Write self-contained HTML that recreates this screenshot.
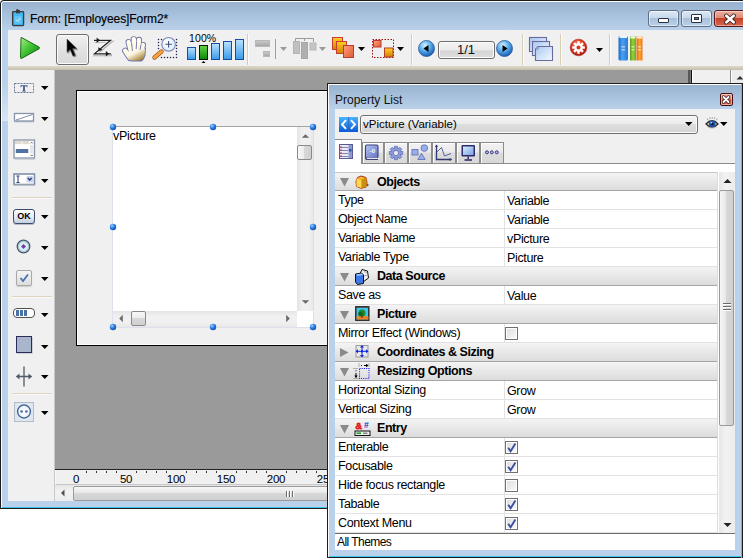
<!DOCTYPE html>
<html><head><meta charset="utf-8">
<style>
*{box-sizing:border-box}
html,body{margin:0;padding:0}
body{width:743px;height:558px;position:relative;overflow:hidden;background:#fff;font-family:"Liberation Sans",sans-serif;font-size:12px;color:#000}
.a{position:absolute}
.t{position:absolute;white-space:nowrap;line-height:14px}
.arr{position:absolute;width:0;height:0;border-left:4px solid transparent;border-right:4px solid transparent;border-top:4px solid #000}
svg{position:absolute;overflow:visible}
</style></head><body>

<div class="a" style="left:0px;top:0px;width:760px;height:509px;background:#1c1c1c;border-top-left-radius:4px"></div>
<div class="a" style="left:1px;top:1px;width:760px;height:507px;background:#fdfdfd;border-top-left-radius:3px"></div>
<div class="a" style="left:2px;top:507px;width:760px;height:1px;background:#3ec3ea"></div>
<div class="a" style="left:2px;top:2px;width:760px;height:505px;background:#b9d1ea;border-top-left-radius:2px"></div>
<div class="a" style="left:2px;top:2px;width:760px;height:28px;background:linear-gradient(#98b2cf,#b9d1ea);border-top-left-radius:2px"></div>
<div class="a" style="left:2px;top:84px;width:6px;height:37px;background:linear-gradient(#b9d1ea,#d6e6f6)"></div>
<div class="t" style="left:30px;top:12px;font-size:12px;letter-spacing:-0.08px;color:#000;-webkit-text-stroke:0.15px #000">Form: [Employees]Form2*</div>
<div class="a" style="left:648px;top:10px;width:31px;height:17px;border:1px solid #5f6f86;border-radius:3px;background:linear-gradient(#dce8f4 0,#c8d9ec 45%,#a9c1dc 50%,#b9d0ea 100%);box-shadow:inset 0 0 0 1px rgba(255,255,255,.55)"></div>
<div class="a" style="left:681px;top:10px;width:31px;height:17px;border:1px solid #5f6f86;border-radius:3px;background:linear-gradient(#dce8f4 0,#c8d9ec 45%,#a9c1dc 50%,#b9d0ea 100%);box-shadow:inset 0 0 0 1px rgba(255,255,255,.55)"></div>
<div class="a" style="left:714px;top:10px;width:50px;height:17px;border:1px solid #5a1a1a;border-radius:3px;background:linear-gradient(#eab0a0 0,#de8c78 45%,#c8402a 50%,#d66a50 100%);box-shadow:inset 0 0 0 1px rgba(255,255,255,.4)"></div>
<div class="a" style="left:658px;top:18px;width:11px;height:5px;background:#fff;border:1px solid #2a3040;border-radius:1px"></div>
<div class="a" style="left:691px;top:14px;width:11px;height:9px;background:#fff;border:1px solid #2a3040;border-radius:1px"></div>
<div class="a" style="left:694px;top:17px;width:5px;height:3px;background:#6a7a90;border:1px solid #2a3040"></div>
<svg style="left:724px;top:14px" width="12" height="10" viewBox="0 0 12 10"><path d="M2.3 1.8L9.7 8.2M9.7 1.8L2.3 8.2" stroke="#3a2020" stroke-width="4.4" stroke-linecap="round"/><path d="M2.3 1.8L9.7 8.2M9.7 1.8L2.3 8.2" stroke="#fff" stroke-width="2.7" stroke-linecap="round"/></svg>
<svg style="left:11px;top:9px" width="15" height="18" viewBox="0 0 15 18"><rect x="1.6" y="2.6" width="11" height="14" rx=".8" fill="#3aaee8" stroke="#3c3c3c" stroke-width="1.3"/><rect x="3" y="4" width="8.2" height="11" fill="#48b8f0"/><rect x="3.5" y="7" width="7.2" height="7.5" fill="#62c4f4"/><path d="M5 1H9V4.3H5Z" fill="#3c3c3c"/><path d="M6.3 0V2" stroke="#3c3c3c" stroke-width="1.6"/><path d="M4.8 10.5L6.6 12.3L9.6 8.8" stroke="#d8f0fc" stroke-width="1" fill="none"/></svg>
<div class="a" style="left:8px;top:30px;width:760px;height:36px;background:#f0f0f0"></div>
<div class="a" style="left:8px;top:66px;width:760px;height:4px;background:linear-gradient(#dcd8c8,#d4d0bf 40%,#c2bea9)"></div>
<svg style="left:19px;top:36px" width="22" height="24" viewBox="0 0 22 24"><defs><linearGradient id="gp" x1="0" y1="0" x2="1" y2="1"><stop offset="0" stop-color="#a8f080"/><stop offset=".5" stop-color="#3cc030"/><stop offset="1" stop-color="#0c7a10"/></linearGradient></defs><path d="M2 2.5Q1.5 1 3 1.8L20 11Q21.2 12 20 12.8L3 22.2Q1.5 23 1.5 21.5Z" fill="url(#gp)" stroke="#1a6a1a" stroke-width="1"/></svg>
<div class="a" style="left:56px;top:34px;width:33px;height:31px;border:1px solid #6e6e6e;border-radius:3px;background:linear-gradient(#f0f0f0,#e2e2e2 50%,#d9d9d9);box-shadow:inset 0 0 0 1px #fafafa"></div>
<svg style="left:64px;top:37px" width="16" height="22" viewBox="0 0 16 22"><path d="M3 2L3 15.5L6.2 12.6L9 19.2L11.3 18.2L8.6 11.8L12.8 11.6Z" fill="#000" stroke="#555" stroke-width=".6" stroke-linejoin="round" filter="drop-shadow(1px 1px 0.6px rgba(0,0,0,.35))"/></svg>
<svg style="left:92px;top:37px" width="22" height="22" viewBox="0 0 22 22"><path d="M2 3.3H18.6L2.4 16.8H19" transform="translate(0.9 1.4)" fill="none" stroke="rgba(0,0,0,.28)" stroke-width="2.2"/><path d="M2 3.3H18.6L2.4 16.8H19" fill="none" stroke="#fff" stroke-width="2.8"/><path d="M2 3.3H18.6L2.4 16.8H19" fill="none" stroke="#1e1e1e" stroke-width="1.25"/><path d="M4.6 0.6L8 3.3L4.6 6Z" fill="#1e1e1e"/><path d="M6.2 10.2L6.6 14.2L10.6 12.8Z" fill="#1e1e1e"/><path d="M13.8 14.1L17.2 16.8L13.8 19.5Z" fill="#1e1e1e"/></svg>
<svg style="left:120px;top:34px" width="30" height="30" viewBox="0 0 30 30"><defs><linearGradient id="gh" gradientUnits="userSpaceOnUse" x1="10" y1="8" x2="20" y2="27"><stop offset="0" stop-color="#ffffee"/><stop offset=".55" stop-color="#fbf6e2"/><stop offset="1" stop-color="#a07a28"/></linearGradient></defs><path d="M8.6 8L11.2 19" stroke="#7476ac" stroke-width="6.1" stroke-linecap="round"/><path d="M13.8 5.3L14.2 17" stroke="#7476ac" stroke-width="6.300000000000001" stroke-linecap="round"/><path d="M19 5.8L18.2 17" stroke="#7476ac" stroke-width="6.199999999999999" stroke-linecap="round"/><path d="M23.2 10.8L21.2 19" stroke="#7476ac" stroke-width="5.699999999999999" stroke-linecap="round"/><path d="M5.2 16.8L10 24" stroke="#7476ac" stroke-width="6.300000000000001" stroke-linecap="round"/><path d="M9 17L25 14.5L24.6 21Q23.5 25 21.5 26.5H11.5Q8.5 24 7 21Z" fill="#7476ac" stroke="#7476ac" stroke-width="1.9" stroke-linejoin="round"/><path d="M8.6 8L11.2 19" stroke="url(#gh)" stroke-width="4.2" stroke-linecap="round"/><path d="M13.8 5.3L14.2 17" stroke="url(#gh)" stroke-width="4.4" stroke-linecap="round"/><path d="M19 5.8L18.2 17" stroke="url(#gh)" stroke-width="4.3" stroke-linecap="round"/><path d="M23.2 10.8L21.2 19" stroke="url(#gh)" stroke-width="3.8" stroke-linecap="round"/><path d="M5.2 16.8L10 24" stroke="url(#gh)" stroke-width="4.4" stroke-linecap="round"/><path d="M9 17L25 14.5L24.6 21Q23.5 25 21.5 26.5H11.5Q8.5 24 7 21Z" fill="url(#gh)" stroke="url(#gh)" stroke-width="0.01" stroke-linejoin="round"/><path d="M11.7 9.5L12.4 17M16.6 8L16.2 15M20.9 11L20 16" stroke="#7476ac" stroke-width=".9"/></svg>
<svg style="left:152px;top:36px" width="28" height="26" viewBox="0 0 28 26"><g fill="#202050"><circle cx="6.5" cy="3.5" r=".75"/><circle cx="9.5" cy="3.5" r=".75"/><circle cx="24.5" cy="3.5" r=".75"/><circle cx="6.5" cy="6.5" r=".75"/><circle cx="24.5" cy="6.5" r=".75"/><circle cx="6.5" cy="9.5" r=".75"/><circle cx="24.5" cy="9.5" r=".75"/><circle cx="6.5" cy="12.5" r=".75"/><circle cx="24.5" cy="12.5" r=".75"/><circle cx="24.5" cy="15.5" r=".75"/><circle cx="24.5" cy="18.5" r=".75"/><circle cx="24.5" cy="21.5" r=".75"/><circle cx="9.5" cy="21.5" r=".75"/><circle cx="12.5" cy="21.5" r=".75"/><circle cx="15.5" cy="21.5" r=".75"/><circle cx="18.5" cy="21.5" r=".75"/><circle cx="21.5" cy="21.5" r=".75"/></g><path d="M2.5 21.5L9.5 15.5" stroke="#a0581a" stroke-width="4.4" stroke-linecap="round"/><path d="M2.5 21.5L9.5 15.5" stroke="#f4a040" stroke-width="3" stroke-linecap="round"/><circle cx="16.6" cy="8.3" r="6.8" fill="#dff4ff" stroke="#8a8ab8" stroke-width="1.2"/><circle cx="15.5" cy="7" r="4" fill="#f6fcff"/><path d="M16.6 5V11.6M13.3 8.3H19.9" stroke="#4a4a7a" stroke-width="1.1"/></svg>
<div class="t" style="left:189px;top:31px;font-size:10.5px;letter-spacing:0.1px;color:#000">100%</div>
<div class="a" style="left:187px;top:47px;width:9px;height:13px;border:1px solid #1a4aa8;background:linear-gradient(#b6e0ff,#3c9ce8)"></div>
<div class="a" style="left:199px;top:45px;width:9px;height:15px;border:1px solid #101010;background:linear-gradient(#60d040,#0a8a0a)"></div>
<div class="a" style="left:211px;top:43px;width:9px;height:17px;border:1px solid #1a4aa8;background:linear-gradient(#b6e0ff,#3c9ce8)"></div>
<div class="a" style="left:223px;top:41px;width:9px;height:19px;border:1px solid #1a4aa8;background:linear-gradient(#b6e0ff,#3c9ce8)"></div>
<div class="a" style="left:235px;top:39px;width:9px;height:21px;border:1px solid #1a4aa8;background:linear-gradient(#b6e0ff,#3c9ce8)"></div>
<svg style="left:201px;top:61px" width="5" height="2" viewBox="0 0 5 2"><path d="M0.5 2L2.5 0L4.5 2Z" fill="#000"/></svg>
<div class="a" style="left:247px;top:34px;width:1px;height:31px;background:#d6cfb6"></div>
<div class="a" style="left:248px;top:34px;width:1px;height:31px;background:#fbfbfb"></div>
<div class="a" style="left:255px;top:40px;width:15px;height:7px;background:linear-gradient(#c8c8c8,#a8a8a8);border:1px solid #b8b8b8"></div>
<div class="a" style="left:263px;top:51px;width:7px;height:6px;background:linear-gradient(#c8c8c8,#a8a8a8);border:1px solid #b8b8b8"></div>
<div class="a" style="left:275px;top:39px;width:1px;height:20px;background:#a0a0a0"></div>
<svg style="left:280px;top:47px" width="8" height="5" viewBox="0 0 8 5"><path d="M0 0H7L3.5 4Z" fill="#9a9a9a"/></svg>
<svg style="left:293px;top:37px" width="24" height="23" viewBox="0 0 24 23"><path d="M2.5 5V1.5H20.5V5M11.5 1.5V4" fill="none" stroke="#9a9a9a" stroke-width="1"/><rect x="0.5" y="4.5" width="6" height="12" fill="#c0c0c0" stroke="#b4b4b4"/><rect x="8.5" y="5.5" width="6" height="16" fill="#b0b0b0" stroke="#a8a8a8"/><rect x="17" y="6" width="6" height="7" fill="#c4c4c4" stroke="#b8b8b8"/></svg>
<svg style="left:319px;top:47px" width="8" height="5" viewBox="0 0 8 5"><path d="M0 0H7L3.5 4Z" fill="#9a9a9a"/></svg>
<svg style="left:331px;top:36px" width="25" height="23" viewBox="0 0 25 23"><defs><linearGradient id="gy" x1="0" y1="0" x2="0" y2="1"><stop offset="0" stop-color="#ffd020"/><stop offset="1" stop-color="#d08000"/></linearGradient><linearGradient id="gs" x1="0" y1="0" x2="1" y2="1"><stop offset="0" stop-color="#ffa080"/><stop offset="1" stop-color="#e05a30"/></linearGradient></defs><rect x="1.5" y="1.5" width="10" height="12" fill="url(#gy)" stroke="#c83c30"/><rect x="5.5" y="5.5" width="10" height="12" fill="url(#gy)" stroke="#c83c30"/><rect x="12.5" y="9.5" width="10" height="12" fill="url(#gs)" stroke="#b83a30"/></svg>
<svg style="left:358px;top:47px" width="8" height="5" viewBox="0 0 8 5"><path d="M0 0H7L3.5 4Z" fill="#000"/></svg>
<svg style="left:371px;top:38px" width="25" height="21" viewBox="0 0 25 21"><rect x="1.5" y="1.5" width="21" height="18" fill="none" stroke="#a01010" stroke-width="1" stroke-dasharray="1.5 1.5"/><rect x="2.5" y="2.5" width="7.5" height="6.5" fill="url(#gs)" stroke="#b83a30"/><rect x="13.5" y="10" width="8.5" height="9" fill="url(#gy)" stroke="#b83a30"/></svg>
<svg style="left:397px;top:47px" width="8" height="5" viewBox="0 0 8 5"><path d="M0 0H7L3.5 4Z" fill="#000"/></svg>
<div class="a" style="left:411px;top:34px;width:1px;height:31px;background:#d6cfb6"></div>
<div class="a" style="left:412px;top:34px;width:1px;height:31px;background:#fbfbfb"></div>
<svg style="left:418px;top:40px" width="17" height="17" viewBox="0 0 17 17"><defs><radialGradient id="gb418" cx=".4" cy=".3" r=".75"><stop offset="0" stop-color="#d8f0ff"/><stop offset=".45" stop-color="#5cb0f0"/><stop offset="1" stop-color="#1050a8"/></radialGradient></defs><circle cx="8.5" cy="8.5" r="8" fill="url(#gb418)" stroke="#2a5a98" stroke-width=".8"/><path d="M10.5 5L5.5 8.5L10.5 12Z" fill="#000"/></svg>
<div class="a" style="left:438px;top:41px;width:57px;height:18px;border:1px solid #6e6e6e;border-radius:3px;background:linear-gradient(#f4f4f4,#ebebeb 50%,#d6d6d6 55%,#dedede);box-shadow:inset 0 0 0 1px #fcfcfc"></div>
<div class="t" style="left:457px;top:42px;font-size:13px;color:#111;line-height:15px">1/1</div>
<svg style="left:496px;top:40px" width="17" height="17" viewBox="0 0 17 17"><defs><radialGradient id="gb496" cx=".4" cy=".3" r=".75"><stop offset="0" stop-color="#d8f0ff"/><stop offset=".45" stop-color="#5cb0f0"/><stop offset="1" stop-color="#1050a8"/></radialGradient></defs><circle cx="8.5" cy="8.5" r="8" fill="url(#gb496)" stroke="#2a5a98" stroke-width=".8"/><path d="M6.5 5L11.5 8.5L6.5 12Z" fill="#000"/></svg>
<div class="a" style="left:522px;top:34px;width:1px;height:31px;background:#d6cfb6"></div>
<div class="a" style="left:523px;top:34px;width:1px;height:31px;background:#fbfbfb"></div>
<svg style="left:528px;top:36px" width="26" height="26" viewBox="0 0 26 26"><defs><linearGradient id="gpg" x1="0" y1="0" x2="1" y2="1"><stop offset="0" stop-color="#a8c8f0"/><stop offset="1" stop-color="#f4fbff"/></linearGradient></defs><rect x="1.5" y="1.5" width="17" height="14" fill="url(#gpg)" stroke="#6a6aa0" stroke-width="1.1"/><rect x="4.5" y="5.5" width="17" height="14" fill="url(#gpg)" stroke="#6a6aa0" stroke-width="1.1"/><path d="M10 10.5H24.5V24.5H7.5V13Z" fill="url(#gpg)" stroke="#6a6aa0" stroke-width="1.1"/><path d="M7.5 13L10 13L10 10.5" fill="#c8d8f0" stroke="#6a6aa0" stroke-width=".8"/></svg>
<div class="a" style="left:560px;top:34px;width:1px;height:31px;background:#d6cfb6"></div>
<div class="a" style="left:561px;top:34px;width:1px;height:31px;background:#fbfbfb"></div>
<svg style="left:569px;top:38px" width="19" height="19" viewBox="0 0 19 19"><defs><radialGradient id="gr" cx=".45" cy=".35" r=".7"><stop offset="0" stop-color="#ff9a80"/><stop offset=".5" stop-color="#e03a20"/><stop offset="1" stop-color="#9a1008"/></radialGradient></defs><circle cx="9.5" cy="9.5" r="8.3" fill="url(#gr)" stroke="#a82010" stroke-width=".6"/><g transform="translate(9.5 9.5)" fill="#fff"><circle r="4.3"/><rect x="-1.2" y="-6.3" width="2.4" height="12.6"/><rect x="-6.3" y="-1.2" width="12.6" height="2.4"/><rect x="-1.2" y="-6.3" width="2.4" height="12.6" transform="rotate(45)"/><rect x="-1.2" y="-6.3" width="2.4" height="12.6" transform="rotate(-45)"/></g><circle cx="9.5" cy="9.5" r="2" fill="#d83820"/></svg>
<svg style="left:596px;top:48px" width="8" height="5" viewBox="0 0 8 5"><path d="M0 0H7L3.5 4Z" fill="#000"/></svg>
<div class="a" style="left:609px;top:34px;width:1px;height:31px;background:#d6cfb6"></div>
<div class="a" style="left:610px;top:34px;width:1px;height:31px;background:#fbfbfb"></div>
<svg style="left:617px;top:35px" width="27" height="27" viewBox="0 0 27 27"><defs><linearGradient id="bb" x1="0" x2="1"><stop offset="0" stop-color="#1a6ac8"/><stop offset=".4" stop-color="#4aa0f0"/><stop offset="1" stop-color="#2a7ad8"/></linearGradient><linearGradient id="bg" x1="0" x2="1"><stop offset="0" stop-color="#5a9a20"/><stop offset=".5" stop-color="#9ad040"/><stop offset="1" stop-color="#6aa828"/></linearGradient><linearGradient id="bo" x1="0" x2="1"><stop offset="0" stop-color="#e06a00"/><stop offset=".5" stop-color="#ffa030"/><stop offset="1" stop-color="#f07a10"/></linearGradient></defs><path d="M1.5 3Q1.5 1 3 1H9.5Q11 1 11 3V24Q11 25.5 9.5 25.5H3Q1.5 25.5 1.5 24Z" fill="url(#bb)"/><rect x="2.5" y="1" width="7.5" height="2" fill="#e8f4ff"/><rect x="13" y="1.5" width="6" height="24" fill="url(#bg)"/><rect x="13.5" y="1.5" width="5" height="2" fill="#f0ffe0"/><rect x="19.5" y="1.5" width="6" height="24" fill="url(#bo)"/><rect x="20" y="1.5" width="5" height="2" fill="#fff0e0"/><g fill="#fff" opacity=".55"><rect x="4.5" y="11" width="3.5" height="1.5"/><rect x="4.5" y="14" width="3.5" height="1.5"/><rect x="14.5" y="11" width="3" height="1.5"/><rect x="14.5" y="14" width="3" height="1.5"/><rect x="21" y="11" width="3" height="1.5"/><rect x="21" y="14" width="3" height="1.5"/></g></svg>
<div class="a" style="left:8px;top:70px;width:46px;height:431px;background:#f0f0f0"></div>
<div class="a" style="left:54px;top:70px;width:1px;height:431px;background:#c8c8c8"></div>
<svg style="left:41px;top:86px" width="8" height="5" viewBox="0 0 8 5"><path d="M0 0H7.5L3.75 4Z" fill="#000"/></svg>
<svg style="left:41px;top:117px" width="8" height="5" viewBox="0 0 8 5"><path d="M0 0H7.5L3.75 4Z" fill="#000"/></svg>
<svg style="left:41px;top:148px" width="8" height="5" viewBox="0 0 8 5"><path d="M0 0H7.5L3.75 4Z" fill="#000"/></svg>
<svg style="left:41px;top:179px" width="8" height="5" viewBox="0 0 8 5"><path d="M0 0H7.5L3.75 4Z" fill="#000"/></svg>
<svg style="left:41px;top:215px" width="8" height="5" viewBox="0 0 8 5"><path d="M0 0H7.5L3.75 4Z" fill="#000"/></svg>
<svg style="left:41px;top:246px" width="8" height="5" viewBox="0 0 8 5"><path d="M0 0H7.5L3.75 4Z" fill="#000"/></svg>
<svg style="left:41px;top:277px" width="8" height="5" viewBox="0 0 8 5"><path d="M0 0H7.5L3.75 4Z" fill="#000"/></svg>
<svg style="left:41px;top:313px" width="8" height="5" viewBox="0 0 8 5"><path d="M0 0H7.5L3.75 4Z" fill="#000"/></svg>
<svg style="left:41px;top:345px" width="8" height="5" viewBox="0 0 8 5"><path d="M0 0H7.5L3.75 4Z" fill="#000"/></svg>
<svg style="left:41px;top:375px" width="8" height="5" viewBox="0 0 8 5"><path d="M0 0H7.5L3.75 4Z" fill="#000"/></svg>
<svg style="left:41px;top:411px" width="8" height="5" viewBox="0 0 8 5"><path d="M0 0H7.5L3.75 4Z" fill="#000"/></svg>
<div class="a" style="left:12px;top:197px;width:40px;height:1px;background:#dcd4bc"></div>
<div class="a" style="left:12px;top:198px;width:40px;height:1px;background:#fafafa"></div>
<div class="a" style="left:12px;top:296px;width:40px;height:1px;background:#dcd4bc"></div>
<div class="a" style="left:12px;top:297px;width:40px;height:1px;background:#fafafa"></div>
<div class="a" style="left:12px;top:393px;width:40px;height:1px;background:#dcd4bc"></div>
<div class="a" style="left:12px;top:394px;width:40px;height:1px;background:#fafafa"></div>
<svg style="left:13px;top:82px" width="22" height="12" viewBox="0 0 22 12"><rect x="1.5" y="1.5" width="19" height="9" fill="none" stroke="#6a7894" stroke-width="1" stroke-dasharray="2 1"/><path d="M7.5 3.2H14.5V5.2H13.8L13.4 4.2H11.9V8.8H12.9V9.6H9.1V8.8H10.1V4.2H8.6L8.2 5.2H7.5Z" fill="#48588a"/></svg>
<svg style="left:13px;top:112px" width="23" height="11" viewBox="0 0 23 11"><rect x="1.5" y="1.5" width="19" height="7.5" fill="#fff" stroke="#8494ac" stroke-width="1.3"/><path d="M1.5 9.6H21" stroke="#9aa4b4" stroke-width="1.4" opacity=".8"/><path d="M3 8L19.5 2.5" stroke="#6070a0" stroke-width=".8"/></svg>
<svg style="left:13px;top:139px" width="23" height="21" viewBox="0 0 23 21"><rect x="1" y="1" width="20.5" height="18" fill="#fff" stroke="#8894a8" stroke-width="1.3"/><rect x="2" y="2" width="6.5" height="3.2" fill="#dedad0"/><rect x="9.5" y="2" width="6.5" height="3.2" fill="#dedad0"/><rect x="17" y="6" width="3.5" height="8.5" fill="#e6e6e6"/><path d="M17.6 4.4L18.75 3.2L19.9 4.4M17.6 15.8L18.75 17L19.9 15.8" stroke="#444" stroke-width=".8" fill="none"/><rect x="2.8" y="10" width="12.5" height="4" fill="#5270a0"/><path d="M1.5 20H22" stroke="#b0b6c0" stroke-width="1"/></svg>
<svg style="left:13px;top:173px" width="23" height="13" viewBox="0 0 23 13"><rect x="1" y="1" width="20.5" height="10.5" fill="#fff" stroke="#8090a8" stroke-width="1.6"/><path d="M1 12H22" stroke="#a8b0bc" stroke-width="1"/><path d="M3.5 3H6.5M5 3V9.5M3.5 9.5H6.5" stroke="#2a3a7a" stroke-width="1"/><rect x="13.5" y="3" width="6.5" height="6.5" rx="1" fill="#c8d4ec"/><path d="M14.8 5L16.75 7L18.7 5" stroke="#2a3a7a" stroke-width="1.4" fill="none"/></svg>
<div class="a" style="left:13px;top:209px;width:22px;height:15px;border:1.5px solid #3c4c6c;border-radius:3px;background:linear-gradient(#ffffff,#e8ecf4 50%,#c4cede);box-shadow:0 1px 0 #b8bcc8"></div>
<div class="t" style="left:13px;top:210px;width:22px;text-align:center;font-size:9px;font-weight:bold;line-height:13px;color:#000">OK</div>
<svg style="left:16px;top:239px" width="15" height="15" viewBox="0 0 15 15"><circle cx="7.5" cy="7.5" r="6.3" fill="#d8f0f8" stroke="#4a5a70" stroke-width="1.3"/><circle cx="7.5" cy="7.5" r="5" fill="none" stroke="#90a8b8" stroke-width=".7"/><path d="M7.5 5L10 7.5L7.5 10L5 7.5Z" fill="#7a3aa0"/></svg>
<div class="a" style="left:16px;top:270px;width:16px;height:16px;border:1px solid #a8a8a8;border-radius:2px;background:linear-gradient(#f4f4f4,#dedede);box-shadow:0 1px 1px rgba(0,0,0,.15)"></div>
<svg style="left:16px;top:270px" width="16" height="16" viewBox="0 0 16 16"><path d="M4.5 8L7 11L12 4.5" fill="none" stroke="#4a70b0" stroke-width="1.8"/></svg>
<div class="a" style="left:13px;top:308px;width:22px;height:10px;border:1.3px solid #505050;border-radius:4px;background:#fff"></div>
<div class="a" style="left:16px;top:310px;width:3px;height:6px;background:#4a72a4"></div>
<div class="a" style="left:20px;top:310px;width:3px;height:6px;background:#4a72a4"></div>
<div class="a" style="left:24px;top:310px;width:3px;height:6px;background:#4a72a4"></div>
<div class="a" style="left:16px;top:336px;width:16px;height:17px;border:1.3px solid #2c2c5c;background:#a9b5ca;box-shadow:1px 1px 0 #d0d0d8"></div>
<svg style="left:15px;top:366px" width="18" height="21" viewBox="0 0 18 21"><path d="M9 0.5V20.5" stroke="#505a68" stroke-width="1.3"/><path d="M1.5 10.5H16.5" stroke="#505a68" stroke-width="1.5"/><path d="M1 10.5L4.5 7.5V13.5Z M17 10.5L13.5 7.5V13.5Z" fill="#505a68"/></svg>
<div class="a" style="left:14px;top:402px;width:20px;height:20px;border:1px solid #b4bcc8;background:#dfe7f1"></div>
<svg style="left:14px;top:402px" width="20" height="20" viewBox="0 0 20 20"><circle cx="10" cy="9.5" r="6.4" fill="#f4f8fc" stroke="#4a6a9c" stroke-width="1.5"/><circle cx="7.6" cy="9.5" r="1.3" fill="#4a6a9c"/><circle cx="12.4" cy="9.5" r="1.3" fill="#4a6a9c"/></svg>
<div class="a" style="left:55px;top:70px;width:634px;height:400px;background:#9a9a9a"></div>
<div class="a" style="left:688px;top:70px;width:2px;height:400px;background:#585858"></div>
<div class="a" style="left:690px;top:70px;width:1px;height:400px;background:#7a7a7a"></div>
<div class="a" style="left:691px;top:70px;width:1px;height:400px;background:#111"></div>
<div class="a" style="left:692px;top:70px;width:1px;height:400px;background:#fff"></div>
<div class="a" style="left:693px;top:70px;width:37px;height:400px;background:#f0f0f0"></div>
<div class="a" style="left:730px;top:70px;width:1px;height:400px;background:#8a8a8a"></div>
<div class="a" style="left:731px;top:70px;width:1px;height:400px;background:#fff"></div>
<div class="a" style="left:732px;top:70px;width:20px;height:400px;background:#ececec"></div>
<div class="a" style="left:55px;top:469px;width:700px;height:1px;background:#222"></div>
<div class="a" style="left:76px;top:90px;width:400px;height:256px;background:#f0f0f0;border:1px solid #000;box-shadow:inset 1px 1px 0 #fff,inset -1px -1px 0 #fff"></div>
<div class="a" style="left:112px;top:126px;width:202px;height:202px;border:1px solid #dce1ea;background:#fff"></div>
<div class="a" style="left:112px;top:126px;width:201px;height:1px;background:#a4a4a4"></div>
<div class="a" style="left:297px;top:127px;width:16px;height:184px;background:linear-gradient(90deg,#e4e4e4,#f0f0f0 30%,#f0f0f0 70%,#e8e8e8)"></div>
<svg style="left:301px;top:133px" width="9" height="6" viewBox="0 0 9 6"><path d="M0.8 4.8L4.5 1.2L8.2 4.8Z" fill="#6a6a6a"/></svg>
<div class="a" style="left:297px;top:145px;width:15px;height:15px;border:1px solid #8a8a8a;border-radius:2px;background:linear-gradient(90deg,#f8f8f8,#ececec 45%,#d8d8d8 50%,#d0d0d0)"></div>
<svg style="left:301px;top:299px" width="9" height="6" viewBox="0 0 9 6"><path d="M0.8 1.2L4.5 4.8L8.2 1.2Z" fill="#6a6a6a"/></svg>
<div class="a" style="left:113px;top:311px;width:184px;height:16px;background:linear-gradient(#e4e4e4,#f0f0f0 30%,#f0f0f0 70%,#e8e8e8)"></div>
<svg style="left:118px;top:314px" width="6" height="9" viewBox="0 0 6 9"><path d="M4.8 0.8L1.2 4.5L4.8 8.2Z" fill="#6a6a6a"/></svg>
<svg style="left:285px;top:314px" width="6" height="9" viewBox="0 0 6 9"><path d="M1.2 0.8L4.8 4.5L1.2 8.2Z" fill="#6a6a6a"/></svg>
<div class="a" style="left:131px;top:311px;width:15px;height:15px;border:1px solid #8a8a8a;border-radius:2px;background:linear-gradient(#f8f8f8,#ececec 45%,#d8d8d8 50%,#d0d0d0)"></div>
<div class="a" style="left:297px;top:311px;width:16px;height:16px;background:#fff"></div>
<div class="t" style="left:113px;top:129px;font-size:12.5px;letter-spacing:-0.3px;color:#000">vPicture</div>
<svg style="left:109px;top:123px" width="8" height="8" viewBox="0 0 8 8"><defs><radialGradient id="hd" cx=".35" cy=".3" r=".8"><stop offset="0" stop-color="#9ad0ff"/><stop offset=".5" stop-color="#2a7ae0"/><stop offset="1" stop-color="#0a4aa8"/></radialGradient></defs><circle cx="4" cy="4" r="3.2" fill="url(#hd)"/></svg>
<svg style="left:209px;top:123px" width="8" height="8" viewBox="0 0 8 8"><defs><radialGradient id="hd" cx=".35" cy=".3" r=".8"><stop offset="0" stop-color="#9ad0ff"/><stop offset=".5" stop-color="#2a7ae0"/><stop offset="1" stop-color="#0a4aa8"/></radialGradient></defs><circle cx="4" cy="4" r="3.2" fill="url(#hd)"/></svg>
<svg style="left:309px;top:123px" width="8" height="8" viewBox="0 0 8 8"><defs><radialGradient id="hd" cx=".35" cy=".3" r=".8"><stop offset="0" stop-color="#9ad0ff"/><stop offset=".5" stop-color="#2a7ae0"/><stop offset="1" stop-color="#0a4aa8"/></radialGradient></defs><circle cx="4" cy="4" r="3.2" fill="url(#hd)"/></svg>
<svg style="left:109px;top:223px" width="8" height="8" viewBox="0 0 8 8"><defs><radialGradient id="hd" cx=".35" cy=".3" r=".8"><stop offset="0" stop-color="#9ad0ff"/><stop offset=".5" stop-color="#2a7ae0"/><stop offset="1" stop-color="#0a4aa8"/></radialGradient></defs><circle cx="4" cy="4" r="3.2" fill="url(#hd)"/></svg>
<svg style="left:309px;top:223px" width="8" height="8" viewBox="0 0 8 8"><defs><radialGradient id="hd" cx=".35" cy=".3" r=".8"><stop offset="0" stop-color="#9ad0ff"/><stop offset=".5" stop-color="#2a7ae0"/><stop offset="1" stop-color="#0a4aa8"/></radialGradient></defs><circle cx="4" cy="4" r="3.2" fill="url(#hd)"/></svg>
<svg style="left:109px;top:323px" width="8" height="8" viewBox="0 0 8 8"><defs><radialGradient id="hd" cx=".35" cy=".3" r=".8"><stop offset="0" stop-color="#9ad0ff"/><stop offset=".5" stop-color="#2a7ae0"/><stop offset="1" stop-color="#0a4aa8"/></radialGradient></defs><circle cx="4" cy="4" r="3.2" fill="url(#hd)"/></svg>
<svg style="left:209px;top:323px" width="8" height="8" viewBox="0 0 8 8"><defs><radialGradient id="hd" cx=".35" cy=".3" r=".8"><stop offset="0" stop-color="#9ad0ff"/><stop offset=".5" stop-color="#2a7ae0"/><stop offset="1" stop-color="#0a4aa8"/></radialGradient></defs><circle cx="4" cy="4" r="3.2" fill="url(#hd)"/></svg>
<svg style="left:309px;top:323px" width="8" height="8" viewBox="0 0 8 8"><defs><radialGradient id="hd" cx=".35" cy=".3" r=".8"><stop offset="0" stop-color="#9ad0ff"/><stop offset=".5" stop-color="#2a7ae0"/><stop offset="1" stop-color="#0a4aa8"/></radialGradient></defs><circle cx="4" cy="4" r="3.2" fill="url(#hd)"/></svg>
<div class="a" style="left:55px;top:470px;width:700px;height:15px;background:#f0f0f0;border-bottom:1px solid #c8c8c8;border-left:1px solid #fafafa"></div>
<div class="a" style="left:55px;top:485px;width:700px;height:16px;background:linear-gradient(#e6e6e6,#f2f2f2 40%,#ececec)"></div>
<div class="a" style="left:86px;top:471px;width:1px;height:2px;background:#333"></div>
<div class="a" style="left:96px;top:471px;width:1px;height:2px;background:#333"></div>
<div class="a" style="left:106px;top:471px;width:1px;height:2px;background:#333"></div>
<div class="a" style="left:116px;top:471px;width:1px;height:2px;background:#333"></div>
<div class="a" style="left:136px;top:471px;width:1px;height:2px;background:#333"></div>
<div class="a" style="left:146px;top:471px;width:1px;height:2px;background:#333"></div>
<div class="a" style="left:156px;top:471px;width:1px;height:2px;background:#333"></div>
<div class="a" style="left:166px;top:471px;width:1px;height:2px;background:#333"></div>
<div class="a" style="left:186px;top:471px;width:1px;height:2px;background:#333"></div>
<div class="a" style="left:196px;top:471px;width:1px;height:2px;background:#333"></div>
<div class="a" style="left:206px;top:471px;width:1px;height:2px;background:#333"></div>
<div class="a" style="left:216px;top:471px;width:1px;height:2px;background:#333"></div>
<div class="a" style="left:236px;top:471px;width:1px;height:2px;background:#333"></div>
<div class="a" style="left:246px;top:471px;width:1px;height:2px;background:#333"></div>
<div class="a" style="left:256px;top:471px;width:1px;height:2px;background:#333"></div>
<div class="a" style="left:266px;top:471px;width:1px;height:2px;background:#333"></div>
<div class="a" style="left:286px;top:471px;width:1px;height:2px;background:#333"></div>
<div class="a" style="left:296px;top:471px;width:1px;height:2px;background:#333"></div>
<div class="a" style="left:306px;top:471px;width:1px;height:2px;background:#333"></div>
<div class="a" style="left:316px;top:471px;width:1px;height:2px;background:#333"></div>
<div class="t" style="left:56px;top:472px;width:40px;text-align:center;font-size:11.5px;letter-spacing:-0.3px;color:#000">0</div>
<div class="t" style="left:106px;top:472px;width:40px;text-align:center;font-size:11.5px;letter-spacing:-0.3px;color:#000">50</div>
<div class="t" style="left:156px;top:472px;width:40px;text-align:center;font-size:11.5px;letter-spacing:-0.3px;color:#000">100</div>
<div class="t" style="left:206px;top:472px;width:40px;text-align:center;font-size:11.5px;letter-spacing:-0.3px;color:#000">150</div>
<div class="t" style="left:256px;top:472px;width:40px;text-align:center;font-size:11.5px;letter-spacing:-0.3px;color:#000">200</div>
<div class="t" style="left:306px;top:472px;width:40px;text-align:center;font-size:11.5px;letter-spacing:-0.3px;color:#000">250</div>
<svg style="left:60px;top:489px" width="6" height="8" viewBox="0 0 6 8"><path d="M4.5 0.5L1 4L4.5 7.5Z" fill="#505050"/></svg>
<div class="a" style="left:73px;top:486px;width:400px;height:15px;border:1px solid #9a9a9a;border-radius:2px;background:linear-gradient(#f6f6f6,#e8e8e8 45%,#d8d8d8 50%,#cfcfcf)"></div>
<svg style="left:285px;top:490px" width="9" height="8" viewBox="0 0 9 8"><path d="M1.5 1V7M4.5 1V7M7.5 1V7" stroke="#6a6a6a" stroke-width="1"/><path d="M2.5 1V7M5.5 1V7M8.5 1V7" stroke="#fff" stroke-width="1"/></svg>
<svg style="left:736px;top:75px" width="8" height="5" viewBox="0 0 8 5"><path d="M0.5 4.5L4 1L7.5 4.5Z" fill="#333"/></svg>
<div class="a" style="left:327px;top:83px;width:416px;height:475px;background:#1c1c1c"></div>
<div class="a" style="left:328px;top:84px;width:414px;height:1px;background:#fdfdfd"></div>
<div class="a" style="left:328px;top:84px;width:1px;height:473px;background:#fdfdfd"></div>
<div class="a" style="left:741px;top:84px;width:1px;height:474px;background:#3ec8f0"></div>
<div class="a" style="left:329px;top:556px;width:412px;height:1px;background:#3ec8f0"></div>
<div class="a" style="left:329px;top:85px;width:412px;height:471px;background:#b9d1ea"></div>
<div class="a" style="left:329px;top:85px;width:412px;height:24px;background:linear-gradient(#98b2cf,#b9d1ea)"></div>
<div class="t" style="left:335px;top:93px;font-size:12px;color:#111">Property List</div>
<div class="a" style="left:335px;top:109px;width:400px;height:441px;background:#f0f0f0"></div>
<div class="a" style="left:335px;top:163px;width:400px;height:9px;background:#fff"></div>
<div class="a" style="left:361px;top:163px;width:374px;height:1px;background:#8c8c8c"></div>
<div class="a" style="left:335px;top:139px;width:27px;height:25px;background:#fff;border-top:1px solid #8c8c8c;border-right:1px solid #8c8c8c"></div>
<div class="a" style="left:362px;top:142px;width:22px;height:22px;background:linear-gradient(#f2f2f2 0,#ebebeb 45%,#dcdcdc 50%,#d8d8d8 100%);border:1px solid #8c8c8c;box-shadow:inset 1px 1px 0 #fff"></div>
<div class="a" style="left:384px;top:142px;width:24px;height:22px;background:linear-gradient(#f2f2f2 0,#ebebeb 45%,#dcdcdc 50%,#d8d8d8 100%);border:1px solid #8c8c8c;box-shadow:inset 1px 1px 0 #fff"></div>
<div class="a" style="left:408px;top:142px;width:24px;height:22px;background:linear-gradient(#f2f2f2 0,#ebebeb 45%,#dcdcdc 50%,#d8d8d8 100%);border:1px solid #8c8c8c;box-shadow:inset 1px 1px 0 #fff"></div>
<div class="a" style="left:432px;top:142px;width:24px;height:22px;background:linear-gradient(#f2f2f2 0,#ebebeb 45%,#dcdcdc 50%,#d8d8d8 100%);border:1px solid #8c8c8c;box-shadow:inset 1px 1px 0 #fff"></div>
<div class="a" style="left:456px;top:142px;width:24px;height:22px;background:linear-gradient(#f2f2f2 0,#ebebeb 45%,#dcdcdc 50%,#d8d8d8 100%);border:1px solid #8c8c8c;box-shadow:inset 1px 1px 0 #fff"></div>
<div class="a" style="left:480px;top:142px;width:24px;height:22px;background:linear-gradient(#f2f2f2 0,#ebebeb 45%,#dcdcdc 50%,#d8d8d8 100%);border:1px solid #8c8c8c;box-shadow:inset 1px 1px 0 #fff"></div>
<div class="a" style="left:720px;top:93px;width:13px;height:13px;border:1px solid #4a1010;border-radius:2px;background:linear-gradient(#eaa898,#d88070 45%,#c84a30 55%,#d87058);box-shadow:inset 0 0 0 1px rgba(255,255,255,.45)"></div>
<svg style="left:720px;top:94px" width="12" height="11" viewBox="0 0 12 11"><path d="M3.5 3L8.5 8M8.5 3L3.5 8" stroke="#3a2a2a" stroke-width="3.4" stroke-linecap="round"/><path d="M3.5 3L8.5 8M8.5 3L3.5 8" stroke="#fff" stroke-width="1.8" stroke-linecap="round"/></svg>
<svg style="left:339px;top:117px" width="19" height="15" viewBox="0 0 19 15"><defs><linearGradient id="gbl" x1="0" y1="0" x2="0" y2="1"><stop offset="0" stop-color="#48b4ff"/><stop offset="1" stop-color="#0a5ad8"/></linearGradient></defs><rect x="0" y="0" width="9.5" height="15" fill="url(#gbl)"/><rect x="9.5" y="0" width="9.5" height="15" fill="url(#gbl)"/><path d="M9.5 0V15" stroke="#0a4ab0" stroke-width=".6"/><path d="M7 3.2L3 7.5L7 11.8M12 3.2L16 7.5L12 11.8" fill="none" stroke="#fff" stroke-width="1.9"/></svg>
<div class="a" style="left:360px;top:115px;width:338px;height:19px;border:1px solid #707070;border-radius:3px;background:linear-gradient(#f4f4f4,#ececec 45%,#dedede 50%,#d4d4d4);box-shadow:inset 0 0 0 1px #fbfbfb"></div>
<div class="t" style="left:363px;top:117px;font-size:11.5px;color:#000">vPicture (Variable)</div>
<svg style="left:685px;top:122px" width="8" height="5" viewBox="0 0 8 5"><path d="M0 0H7.5L3.75 4Z" fill="#000"/></svg>
<svg style="left:705px;top:117px" width="14" height="12" viewBox="0 0 14 12"><path d="M1 7Q7 0.5 13 7Q7 13 1 7Z" fill="#efe4d4" stroke="#2a2a2a" stroke-width="1.3"/><circle cx="7.2" cy="6.8" r="3.4" fill="#1e56a8"/><circle cx="7.2" cy="7" r="1.5" fill="#0a1a40"/><circle cx="6.4" cy="5.6" r=".9" fill="#cfe0ff"/><path d="M3 3.2L2.2 1.6M5 2L4.7 0.4M7.2 1.6V0M9.4 2L9.8 0.4M11.4 3.2L12.2 1.6" stroke="#777" stroke-width=".7"/><path d="M2 9.5Q7 12.8 12 9.5" stroke="#888" stroke-width=".8" fill="none" opacity=".6"/></svg>
<svg style="left:720px;top:122px" width="8" height="5" viewBox="0 0 8 5"><path d="M0 0H7.5L3.75 4Z" fill="#000"/></svg>
<svg style="left:338px;top:143px" width="16" height="17" viewBox="0 0 16 17"><rect x="1.5" y="1.5" width="13" height="14" fill="#e8eaf8" stroke="#5a5a90" stroke-width="1"/><path d="M2 4.5H10.5M2 7.5H10.5M2 10.5H10.5M2 13.5H10.5" stroke="#7878a8" stroke-width=".9"/><rect x="10.5" y="2" width="3.5" height="13" fill="#8c98d0"/><rect x="11" y="6" width="2.5" height="2.5" fill="#2a5aa8"/><g fill="#d02020"><circle cx="3" cy="4" r=".8"/><circle cx="3" cy="7" r=".8"/><circle cx="3" cy="10" r=".8"/><circle cx="3" cy="13" r=".8"/></g></svg>
<svg style="left:364px;top:144px" width="16" height="17" viewBox="0 0 16 17"><defs><linearGradient id="gbk" x1="0" y1="0" x2="1" y2="1"><stop offset="0" stop-color="#b8c8f4"/><stop offset="1" stop-color="#6070c0"/></linearGradient></defs><rect x="1.5" y="1" width="12.5" height="13" rx="1.5" fill="url(#gbk)" stroke="#40407a" stroke-width="1.1"/><path d="M1.5 13.5Q1.5 15.5 3.5 15.5H14" fill="none" stroke="#40407a" stroke-width="1.2"/><path d="M3 14.3H13.5" stroke="#fff" stroke-width="1"/><text x="8.5" y="8.5" text-anchor="middle" font-family="Liberation Sans" font-weight="bold" font-size="6" fill="#fff">-0</text></svg>
<svg style="left:388px;top:145px" width="16" height="16" viewBox="0 0 16 16"><g transform="translate(8 8)" fill="#8a9ad8" stroke="#5a6ab0" stroke-width=".6"><circle r="5.3"/><rect x="-1.5" y="-6.8" width="3" height="13.6"/><rect x="-1.5" y="-6.8" width="3" height="13.6" transform="rotate(45)"/><rect x="-1.5" y="-6.8" width="3" height="13.6" transform="rotate(90)"/><rect x="-1.5" y="-6.8" width="3" height="13.6" transform="rotate(135)"/></g><circle cx="8" cy="8" r="4.6" fill="#8a9ad8"/><circle cx="8" cy="8" r="2.6" fill="#ececec" stroke="#5a6ab0" stroke-width=".8"/></svg>
<svg style="left:411px;top:144px" width="17" height="17" viewBox="0 0 17 17"><rect x="1" y="5.5" width="6" height="5.5" fill="#9ab0ec" stroke="#5a6ab0" stroke-width=".8"/><circle cx="13.3" cy="4.1" r="3.3" fill="#9ab0ec" stroke="#5a6ab0" stroke-width=".8"/><path d="M10.5 9.3L14.2 15.5H6.8Z" fill="#9ab0ec" stroke="#5a6ab0" stroke-width=".8"/></svg>
<svg style="left:435px;top:144px" width="18" height="17" viewBox="0 0 18 17"><path d="M1.5 1V15.5H16.5" fill="none" stroke="#303870" stroke-width="1.3"/><path d="M0 3L1.5 0.5L3 3Z M14.5 14L17 15.5L14.5 17Z" fill="#303870"/><path d="M2 8L6.5 3.5L9.5 12L16 9.5" fill="none" stroke="#5a6298" stroke-width="1"/></svg>
<svg style="left:460px;top:144px" width="17" height="18" viewBox="0 0 17 18"><rect x="1.5" y="1" width="13.5" height="11.5" rx="1" fill="#2c2c6c"/><rect x="3" y="2.5" width="10.5" height="8.5" fill="url(#gmon)"/><defs><linearGradient id="gmon" x1="0" y1="0" x2="1" y2="1"><stop offset="0" stop-color="#d8f0ff"/><stop offset="1" stop-color="#7aa0e0"/></linearGradient></defs><path d="M8.2 12.5V15" stroke="#2c2c6c" stroke-width="1.5"/><path d="M4.5 16H12" stroke="#2c2c6c" stroke-width="1.6"/></svg>
<svg style="left:484px;top:149px" width="16" height="7" viewBox="0 0 16 7"><g fill="#b0b8e0" stroke="#3a3a80" stroke-width="1"><circle cx="3" cy="3.3" r="1.5"/><circle cx="7.8" cy="3.3" r="1.5"/><circle cx="12.8" cy="3.3" r="1.5"/></g></svg>
<div class="a" style="left:335px;top:172px;width:383px;height:361px;background:#fff"></div>
<div class="a" style="left:335px;top:172px;width:383px;height:19px;background:linear-gradient(#f4f4f4,#dcdcdc);border-bottom:1px solid #a6a6a6;border-top:1px solid #c4c4c4"></div>
<svg style="left:340px;top:178px" width="9" height="9" viewBox="0 0 9 9"><path d="M0 0H9L4.5 8.5Z" fill="#8a8a8a"/></svg>
<div class="t" style="left:377px;top:174.5px;font-weight:bold;font-size:12.5px;letter-spacing:-0.45px;color:#000">Objects</div>
<svg style="left:355px;top:175px" width="15" height="14" viewBox="0 0 15 14"><path d="M6 1L11 2.5L12 7.5L11 12L6 13.3L1.5 11.5L1 6L2.5 2.5Z" fill="#f8c030" stroke="#a01a10" stroke-width=".9"/><path d="M2 3.5L6.5 5L11 3" fill="none" stroke="#e88a10" stroke-width="1"/><path d="M1.5 3.5L6.5 5V13L1.5 11.5Z" fill="#ffd850"/><path d="M6.5 5L11.5 3V12L6.5 13Z" fill="#c89010"/><path d="M12 8.5L14 10L12 11.5Z" fill="#555"/></svg>
<div class="a" style="left:335px;top:209px;width:383px;height:1px;background:#e2e2e2"></div>
<div class="a" style="left:504px;top:191px;width:1px;height:18px;background:#e2e2e2"></div>
<div class="t" style="left:338px;top:193px;font-size:12.5px;letter-spacing:-0.35px">Type</div>
<div class="t" style="left:507px;top:194px;font-size:12.5px;letter-spacing:-0.35px">Variable</div>
<div class="a" style="left:335px;top:228px;width:383px;height:1px;background:#e2e2e2"></div>
<div class="a" style="left:504px;top:210px;width:1px;height:18px;background:#e2e2e2"></div>
<div class="t" style="left:338px;top:212px;font-size:12.5px;letter-spacing:-0.35px">Object Name</div>
<div class="t" style="left:507px;top:213px;font-size:12.5px;letter-spacing:-0.35px">Variable</div>
<div class="a" style="left:335px;top:247px;width:383px;height:1px;background:#e2e2e2"></div>
<div class="a" style="left:504px;top:229px;width:1px;height:18px;background:#e2e2e2"></div>
<div class="t" style="left:338px;top:231px;font-size:12.5px;letter-spacing:-0.35px">Variable Name</div>
<div class="t" style="left:507px;top:232px;font-size:12.5px;letter-spacing:-0.35px">vPicture</div>
<div class="a" style="left:335px;top:266px;width:383px;height:1px;background:#e2e2e2"></div>
<div class="a" style="left:504px;top:248px;width:1px;height:18px;background:#e2e2e2"></div>
<div class="t" style="left:338px;top:250px;font-size:12.5px;letter-spacing:-0.35px">Variable Type</div>
<div class="t" style="left:507px;top:251px;font-size:12.5px;letter-spacing:-0.35px">Picture</div>
<div class="a" style="left:335px;top:267px;width:383px;height:19px;background:linear-gradient(#f4f4f4,#dcdcdc);border-bottom:1px solid #a6a6a6"></div>
<svg style="left:340px;top:273px" width="9" height="9" viewBox="0 0 9 9"><path d="M0 0H9L4.5 8.5Z" fill="#8a8a8a"/></svg>
<div class="t" style="left:377px;top:268.5px;font-weight:bold;font-size:12.5px;letter-spacing:-0.45px;color:#000">Data Source</div>
<svg style="left:354px;top:268px" width="16" height="17" viewBox="0 0 16 17"><path d="M8 1.5L13.5 3L14.5 10L9 14L3 12Z" fill="#eee" stroke="#111" stroke-width="1"/><path d="M1.5 6L7.5 5L9.5 7V15.5L3.5 16.5L1.5 14Z" fill="#3a78e8" stroke="#111" stroke-width="1"/><path d="M2 6.5L7.5 5.5L9 7L3.5 8Z" fill="#9ac0ff"/><path d="M10 3.5L13 4.5M10 8L13.5 7" stroke="#999" stroke-width=".8"/></svg>
<div class="a" style="left:335px;top:304px;width:383px;height:1px;background:#e2e2e2"></div>
<div class="a" style="left:504px;top:286px;width:1px;height:18px;background:#e2e2e2"></div>
<div class="t" style="left:338px;top:288px;font-size:12.5px;letter-spacing:-0.35px">Save as</div>
<div class="t" style="left:507px;top:289px;font-size:12.5px;letter-spacing:-0.35px">Value</div>
<div class="a" style="left:335px;top:305px;width:383px;height:19px;background:linear-gradient(#f4f4f4,#dcdcdc);border-bottom:1px solid #a6a6a6"></div>
<svg style="left:340px;top:311px" width="9" height="9" viewBox="0 0 9 9"><path d="M0 0H9L4.5 8.5Z" fill="#8a8a8a"/></svg>
<div class="t" style="left:377px;top:306.5px;font-weight:bold;font-size:12.5px;letter-spacing:-0.45px;color:#000">Picture</div>
<svg style="left:355px;top:306px" width="15" height="15" viewBox="0 0 15 15"><rect x=".8" y=".8" width="13" height="13.4" fill="#3ac8f0" stroke="#222" stroke-width="1.4"/><path d="M1.5 1.5H13.5" stroke="#555" stroke-width="1"/><path d="M1.5 10.5Q7 9 13.5 10.5V13.5H1.5Z" fill="#f08020"/><circle cx="7" cy="7" r="3.5" fill="#1a8a2a"/><circle cx="5.5" cy="8" r="2.3" fill="#0a6a1a"/><path d="M7 9V12" stroke="#6a3a10" stroke-width="1.3"/><circle cx="8" cy="6" r=".6" fill="#e02020"/></svg>
<div class="a" style="left:335px;top:342px;width:383px;height:1px;background:#e2e2e2"></div>
<div class="a" style="left:504px;top:324px;width:1px;height:18px;background:#e2e2e2"></div>
<div class="t" style="left:338px;top:326px;font-size:12.5px;letter-spacing:-0.35px">Mirror Effect (Windows)</div>
<div class="a" style="left:505px;top:327px;width:13px;height:13px;border:1px solid #707070;background:linear-gradient(135deg,#dcdcdc,#fbfbfb);box-shadow:inset 0 0 0 1px #fff"></div>
<div class="a" style="left:335px;top:343px;width:383px;height:19px;background:linear-gradient(#f4f4f4,#dcdcdc);border-bottom:1px solid #a6a6a6"></div>
<svg style="left:340px;top:348px" width="9" height="9" viewBox="0 0 9 9"><path d="M0 0V9L8.5 4.5Z" fill="#8a8a8a"/></svg>
<div class="t" style="left:377px;top:344.5px;font-weight:bold;font-size:12.5px;letter-spacing:-0.45px;color:#000">Coordinates &amp; Sizing</div>
<svg style="left:355px;top:345px" width="14" height="13" viewBox="0 0 14 13"><rect x="1" y=".5" width="12" height="11.5" fill="#e8e8e8" stroke="#9a9a9a" stroke-width="1"/><path d="M7 1.5V11M2 6.3H12" stroke="#0a20e0" stroke-width="1"/><path d="M7 0L9 2.5H5Z M7 12.6L9 10H5Z M0.5 6.3L3 4.3V8.3Z M13.5 6.3L11 4.3V8.3Z" fill="#0a20e0"/><rect x="6" y="5.3" width="2" height="2" fill="#0a20e0"/></svg>
<div class="a" style="left:335px;top:362px;width:383px;height:19px;background:linear-gradient(#f4f4f4,#dcdcdc);border-bottom:1px solid #a6a6a6"></div>
<svg style="left:340px;top:368px" width="9" height="9" viewBox="0 0 9 9"><path d="M0 0H9L4.5 8.5Z" fill="#8a8a8a"/></svg>
<div class="t" style="left:377px;top:363.5px;font-weight:bold;font-size:12.5px;letter-spacing:-0.45px;color:#000">Resizing Options</div>
<svg style="left:353px;top:363px" width="17" height="17" viewBox="0 0 17 17"><rect x="6.5" y="5.5" width="9.5" height="10" fill="none" stroke="#2020ff" stroke-width="1.1" stroke-dasharray="1.1 1.1"/><path d="M6 0V4M16 0V4" stroke="#888" stroke-width=".6"/><path d="M11 2.5H15" stroke="#000" stroke-width="1"/><path d="M15.5 2.5L13 0.8V4.2Z" fill="#000"/><circle cx="8.5" cy="2.5" r=".6" fill="#000"/><path d="M0 5.5H5M0 15.5H5" stroke="#888" stroke-width=".6"/><path d="M3 10V14.5" stroke="#000" stroke-width="1"/><path d="M3 15L1.3 12.5H4.7Z" fill="#000"/><circle cx="3" cy="7.8" r=".6" fill="#000"/></svg>
<div class="a" style="left:335px;top:399px;width:383px;height:1px;background:#e2e2e2"></div>
<div class="a" style="left:504px;top:381px;width:1px;height:18px;background:#e2e2e2"></div>
<div class="t" style="left:338px;top:383px;font-size:12.5px;letter-spacing:-0.35px">Horizontal Sizing</div>
<div class="t" style="left:507px;top:384px;font-size:12.5px;letter-spacing:-0.35px">Grow</div>
<div class="a" style="left:335px;top:418px;width:383px;height:1px;background:#e2e2e2"></div>
<div class="a" style="left:504px;top:400px;width:1px;height:18px;background:#e2e2e2"></div>
<div class="t" style="left:338px;top:402px;font-size:12.5px;letter-spacing:-0.35px">Vertical Sizing</div>
<div class="t" style="left:507px;top:403px;font-size:12.5px;letter-spacing:-0.35px">Grow</div>
<div class="a" style="left:335px;top:419px;width:383px;height:19px;background:linear-gradient(#f4f4f4,#dcdcdc);border-bottom:1px solid #a6a6a6"></div>
<svg style="left:340px;top:425px" width="9" height="9" viewBox="0 0 9 9"><path d="M0 0H9L4.5 8.5Z" fill="#8a8a8a"/></svg>
<div class="t" style="left:377px;top:420.5px;font-weight:bold;font-size:12.5px;letter-spacing:-0.45px;color:#000">Entry</div>
<svg style="left:354px;top:420px" width="17" height="17" viewBox="0 0 17 17"><text x="1.5" y="9" font-family="Liberation Sans" font-size="9.5" fill="none" stroke="#e02020" stroke-width=".9">&amp;</text><text x="10" y="8.3" font-family="Liberation Sans" font-weight="bold" font-size="8.5" fill="#1a3ac8">#</text><rect x="1" y="11" width="15" height="4.5" fill="#f0f0f0" stroke="#111" stroke-width="1"/><path d="M2.5 13.2H7" stroke="#20a020" stroke-width="1.6"/><path d="M9 13.2H13.5" stroke="#555" stroke-width="1"/></svg>
<div class="a" style="left:335px;top:456px;width:383px;height:1px;background:#e2e2e2"></div>
<div class="a" style="left:504px;top:438px;width:1px;height:18px;background:#e2e2e2"></div>
<div class="t" style="left:338px;top:440px;font-size:12.5px;letter-spacing:-0.35px">Enterable</div>
<div class="a" style="left:505px;top:441px;width:13px;height:13px;border:1px solid #707070;background:linear-gradient(135deg,#dcdcdc,#fbfbfb);box-shadow:inset 0 0 0 1px #fff"></div>
<svg style="left:505px;top:441px" width="13" height="13" viewBox="0 0 13 13"><path d="M3.2 6.8L5.6 10.2L10.4 2.6" fill="none" stroke="#3c4fa0" stroke-width="1.9"/></svg>
<div class="a" style="left:335px;top:475px;width:383px;height:1px;background:#e2e2e2"></div>
<div class="a" style="left:504px;top:457px;width:1px;height:18px;background:#e2e2e2"></div>
<div class="t" style="left:338px;top:459px;font-size:12.5px;letter-spacing:-0.35px">Focusable</div>
<div class="a" style="left:505px;top:460px;width:13px;height:13px;border:1px solid #707070;background:linear-gradient(135deg,#dcdcdc,#fbfbfb);box-shadow:inset 0 0 0 1px #fff"></div>
<svg style="left:505px;top:460px" width="13" height="13" viewBox="0 0 13 13"><path d="M3.2 6.8L5.6 10.2L10.4 2.6" fill="none" stroke="#3c4fa0" stroke-width="1.9"/></svg>
<div class="a" style="left:335px;top:494px;width:383px;height:1px;background:#e2e2e2"></div>
<div class="a" style="left:504px;top:476px;width:1px;height:18px;background:#e2e2e2"></div>
<div class="t" style="left:338px;top:478px;font-size:12.5px;letter-spacing:-0.35px">Hide focus rectangle</div>
<div class="a" style="left:505px;top:479px;width:13px;height:13px;border:1px solid #707070;background:linear-gradient(135deg,#dcdcdc,#fbfbfb);box-shadow:inset 0 0 0 1px #fff"></div>
<div class="a" style="left:335px;top:513px;width:383px;height:1px;background:#e2e2e2"></div>
<div class="a" style="left:504px;top:495px;width:1px;height:18px;background:#e2e2e2"></div>
<div class="t" style="left:338px;top:497px;font-size:12.5px;letter-spacing:-0.35px">Tabable</div>
<div class="a" style="left:505px;top:498px;width:13px;height:13px;border:1px solid #707070;background:linear-gradient(135deg,#dcdcdc,#fbfbfb);box-shadow:inset 0 0 0 1px #fff"></div>
<svg style="left:505px;top:498px" width="13" height="13" viewBox="0 0 13 13"><path d="M3.2 6.8L5.6 10.2L10.4 2.6" fill="none" stroke="#3c4fa0" stroke-width="1.9"/></svg>
<div class="a" style="left:335px;top:532px;width:383px;height:1px;background:#e2e2e2"></div>
<div class="a" style="left:504px;top:514px;width:1px;height:18px;background:#e2e2e2"></div>
<div class="t" style="left:338px;top:516px;font-size:12.5px;letter-spacing:-0.35px">Context Menu</div>
<div class="a" style="left:505px;top:517px;width:13px;height:13px;border:1px solid #707070;background:linear-gradient(135deg,#dcdcdc,#fbfbfb);box-shadow:inset 0 0 0 1px #fff"></div>
<svg style="left:505px;top:517px" width="13" height="13" viewBox="0 0 13 13"><path d="M3.2 6.8L5.6 10.2L10.4 2.6" fill="none" stroke="#3c4fa0" stroke-width="1.9"/></svg>
<div class="a" style="left:717px;top:172px;width:1px;height:361px;background:#dcdcdc"></div>
<div class="a" style="left:718px;top:172px;width:1px;height:361px;background:#fff"></div>
<div class="a" style="left:719px;top:172px;width:16px;height:361px;background:linear-gradient(90deg,#e6e6e6,#f2f2f2 40%,#ececec)"></div>
<div class="a" style="left:719px;top:190px;width:15px;height:236px;border:1px solid #9a9a9a;border-radius:2px;background:linear-gradient(90deg,#f6f6f6,#e8e8e8 45%,#d8d8d8 50%,#cfcfcf)"></div>
<svg style="left:723px;top:178px" width="9" height="6" viewBox="0 0 9 6"><path d="M0.5 5L4.5 1L8.5 5Z" fill="#222"/></svg>
<svg style="left:723px;top:522px" width="9" height="6" viewBox="0 0 9 6"><path d="M0.5 1L4.5 5L8.5 1Z" fill="#222"/></svg>
<svg style="left:722px;top:302px" width="10" height="9" viewBox="0 0 10 9"><path d="M1 1.5H9M1 4.5H9M1 7.5H9" stroke="#6a6a6a" stroke-width="1"/><path d="M1 2.5H9M1 5.5H9M1 8.5H9" stroke="#fff" stroke-width="1"/></svg>
<div class="a" style="left:335px;top:533px;width:400px;height:1px;background:#6e6e6e"></div>
<div class="a" style="left:335px;top:534px;width:400px;height:16px;background:#fff"></div>
<div class="t" style="left:337px;top:535px;font-size:12px;letter-spacing:-0.55px">All Themes</div>
</body></html>
